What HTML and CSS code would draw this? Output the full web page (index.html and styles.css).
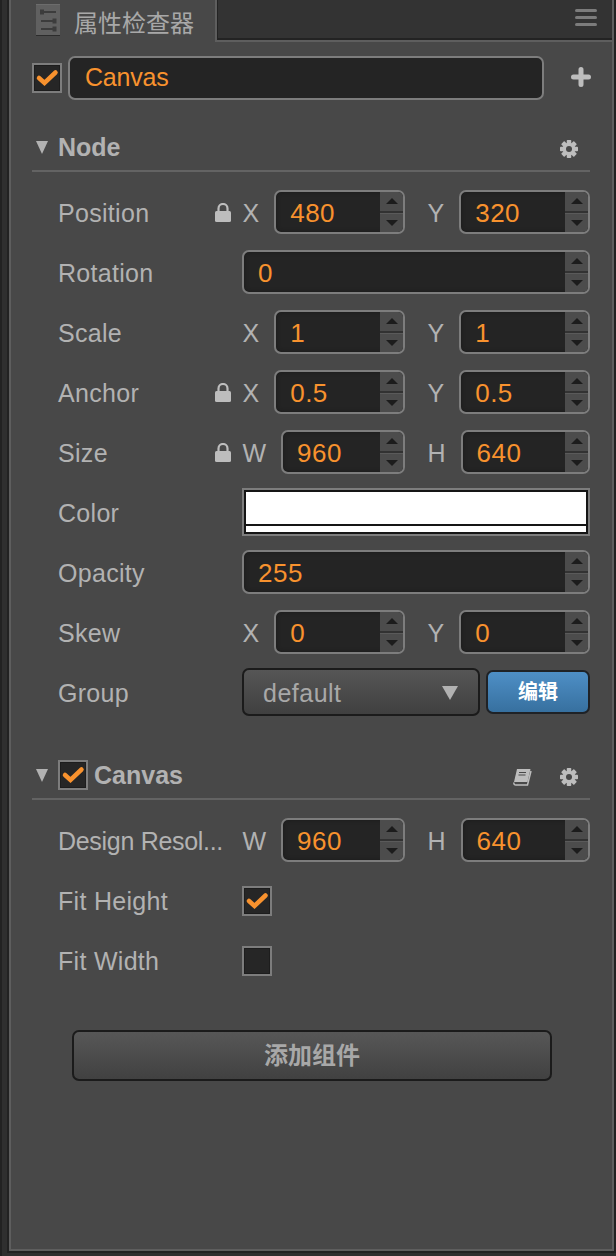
FILE: index.html
```html
<!DOCTYPE html>
<html lang="en">

<head>
    <meta charset="UTF-8">
    <title>属性检查器</title>
    <link rel="stylesheet" href="styles.css">
</head>

<body>
    <svg class="defs" width="0" height="0">
        <symbol id="gear" viewBox="0 0 24 24">
            <g fill="#bdbdbd">
                <rect x="9" y="0" width="6" height="24" rx="1"/>
                <rect x="9" y="0" width="6" height="24" rx="1" transform="rotate(45 12 12)"/>
                <rect x="9" y="0" width="6" height="24" rx="1" transform="rotate(90 12 12)"/>
                <rect x="9" y="0" width="6" height="24" rx="1" transform="rotate(135 12 12)"/>
            </g>
            <circle cx="12" cy="12" r="6.5" fill="none" stroke="#bdbdbd" stroke-width="4"/>
            <circle cx="12" cy="12" r="4" fill="#484848"/>
        </symbol>
        <symbol id="lock" viewBox="0 0 16 19">
            <path d="M3.500 9V5.500a4.500 4.500 0 0 1 9 0V9" fill="none" stroke="#bdbdbd" stroke-width="2.200"/>
            <rect x="0" y="8" width="16" height="11" rx="1.500" fill="#bdbdbd"/>
        </symbol>
        <symbol id="check" viewBox="0 0 24 24">
            <path d="M4 12l5.500 5L20.500 6.500" fill="none" stroke="#f8922e" stroke-width="4.500" stroke-linecap="round"/>
        </symbol>
    </svg>

    <div class="panel">
        <div class="tabbar">
            <div class="tab">
                <svg class="tab-icon" width="24" height="32" viewBox="0 0 24 32">
                    <rect width="24" height="31" fill="#606060"/>
                    <rect width="24" height="1" fill="#6c6c6c"/>
                    <rect y="31" width="24" height="1" fill="#2c2c2c"/>
                    <path d="M5 8h15M5 17h15M5 25h15" stroke="#3c3c3c" stroke-width="2"/>
                    <path d="M6 5.500v5M18.500 14.500v5M18.500 22.500v5" stroke="#3c3c3c" stroke-width="4"/>
                </svg>
                <span class="tab-title">属性检查器</span>
            </div>
            <div class="tab-rest">
                <div class="menu"><i></i><i></i><i></i></div>
            </div>
        </div>

        <div class="content">
            <div class="name-row">
                <span class="check"><svg width="24" height="24"><use href="#check"/></svg></span>
                <div class="name-input">Canvas</div>
                <svg class="plus" width="20" height="20" viewBox="0 0 20 20">
                    <path d="M10 2.500v15M2.500 10h15" stroke="#bdbdbd" stroke-width="5" stroke-linecap="round"/>
                </svg>
            </div>

            <div class="sec-head">
                <span class="tri"></span>
                <span class="sec-title">Node</span>
                <svg class="gear" width="18" height="18"><use href="#gear"/></svg>
            </div>

            <div class="row">
                <div class="label"><span>Position</span><svg class="lock" width="16" height="19"><use href="#lock"/></svg></div>
                <div class="pair-wrap">
                    <div class="pair"><span class="axis">X</span><div class="field"><span class="val">480</span><div class="spin"><i class="up"></i><i class="down"></i></div></div></div>
                    <div class="pair"><span class="axis">Y</span><div class="field"><span class="val">320</span><div class="spin"><i class="up"></i><i class="down"></i></div></div></div>
                </div>
            </div>
            <div class="row">
                <div class="label"><span>Rotation</span></div>
                <div class="field"><span class="val">0</span><div class="spin"><i class="up"></i><i class="down"></i></div></div>
            </div>
            <div class="row">
                <div class="label"><span>Scale</span></div>
                <div class="pair-wrap">
                    <div class="pair"><span class="axis">X</span><div class="field"><span class="val">1</span><div class="spin"><i class="up"></i><i class="down"></i></div></div></div>
                    <div class="pair"><span class="axis">Y</span><div class="field"><span class="val">1</span><div class="spin"><i class="up"></i><i class="down"></i></div></div></div>
                </div>
            </div>
            <div class="row">
                <div class="label"><span>Anchor</span><svg class="lock" width="16" height="19"><use href="#lock"/></svg></div>
                <div class="pair-wrap">
                    <div class="pair"><span class="axis">X</span><div class="field"><span class="val">0.5</span><div class="spin"><i class="up"></i><i class="down"></i></div></div></div>
                    <div class="pair"><span class="axis">Y</span><div class="field"><span class="val">0.5</span><div class="spin"><i class="up"></i><i class="down"></i></div></div></div>
                </div>
            </div>
            <div class="row">
                <div class="label"><span>Size</span><svg class="lock" width="16" height="19"><use href="#lock"/></svg></div>
                <div class="pair-wrap">
                    <div class="pair"><span class="axis">W</span><div class="field"><span class="val">960</span><div class="spin"><i class="up"></i><i class="down"></i></div></div></div>
                    <div class="pair"><span class="axis">H</span><div class="field"><span class="val">640</span><div class="spin"><i class="up"></i><i class="down"></i></div></div></div>
                </div>
            </div>
            <div class="row">
                <div class="label"><span>Color</span></div>
                <div class="color"><div class="color-main"></div><div class="color-alpha"></div></div>
            </div>
            <div class="row">
                <div class="label"><span>Opacity</span></div>
                <div class="field"><span class="val">255</span><div class="spin"><i class="up"></i><i class="down"></i></div></div>
            </div>
            <div class="row">
                <div class="label"><span>Skew</span></div>
                <div class="pair-wrap">
                    <div class="pair"><span class="axis">X</span><div class="field"><span class="val">0</span><div class="spin"><i class="up"></i><i class="down"></i></div></div></div>
                    <div class="pair"><span class="axis">Y</span><div class="field"><span class="val">0</span><div class="spin"><i class="up"></i><i class="down"></i></div></div></div>
                </div>
            </div>
            <div class="row">
                <div class="label"><span>Group</span></div>
                <div class="group">
                    <div class="select"><span>default</span><span class="select-tri"></span></div>
                    <div class="btn-edit">编辑</div>
                </div>
            </div>

            <div class="sec-head sec-canvas">
                <span class="tri"></span>
                <span class="check"><svg width="24" height="24"><use href="#check"/></svg></span>
                <span class="sec-title">Canvas</span>
                <svg class="book" width="20" height="18" viewBox="0 0 20 18">
                    <path d="M5 1h13.500l-3 13H2z" fill="#bdbdbd"/>
                    <path d="M2 14.500q-.6 2.500 2 2.500h11.500l3.500-14" fill="none" stroke="#bdbdbd" stroke-width="1.500"/>
                    <path d="M7 4.500h7M6.500 7h7" stroke="#484848" stroke-width="1.200"/>
                </svg>
                <svg class="gear" width="18" height="18"><use href="#gear"/></svg>
            </div>

            <div class="row row-first">
                <div class="label"><span class="nowrap">Design Resol...</span></div>
                <div class="pair-wrap">
                    <div class="pair"><span class="axis">W</span><div class="field"><span class="val">960</span><div class="spin"><i class="up"></i><i class="down"></i></div></div></div>
                    <div class="pair"><span class="axis">H</span><div class="field"><span class="val">640</span><div class="spin"><i class="up"></i><i class="down"></i></div></div></div>
                </div>
            </div>
            <div class="row">
                <div class="label"><span>Fit Height</span></div>
                <span class="check"><svg width="24" height="24"><use href="#check"/></svg></span>
            </div>
            <div class="row">
                <div class="label"><span>Fit Width</span></div>
                <span class="check"></span>
            </div>

            <div class="btn-add">添加组件</div>
        </div>
    </div>
</body>

</html>
```
FILE: styles.css
```css
body {
    margin: 0;
    height: 1256px;
    overflow: hidden;
    background-color: #2f2f2f;
    border-left: 2px solid #222;
    box-sizing: border-box;
    font-family: "Liberation Sans", "Noto Sans CJK SC", sans-serif;
    font-size: 25px;
    color: #b2b2b2;
}

.defs {
    position: absolute;
}

.panel {
    box-sizing: border-box;
    width: 605px;
    height: 1251px;
    margin-left: 7px;
    border-left: 2px solid #5e5e5e;
    border-right: 2px solid #5e5e5e;
    border-bottom: 2px solid #5e5e5e;
    background-color: #484848;
    box-shadow: 0 0 0 2px #222;
}

/* tabs */
.tabbar {
    display: flex;
    height: 42px;
}

.tab {
    display: flex;
    align-items: center;
    width: 204px;
    padding-left: 25px;
    box-sizing: border-box;
}

.tab-icon {
    margin-top: -2px;
}

.tab-title {
    margin-left: 14px;
    font-size: 24px;
    color: #a8a8a8;
}

.tab-rest {
    flex: 1;
    display: flex;
    justify-content: flex-end;
    box-sizing: border-box;
    padding: 9px 15px 0 0;
    background-color: #333;
    border-left: 2px solid #5e5e5e;
    border-bottom: 2px solid #5e5e5e;
    box-shadow: inset 1px 0 0 #232323, inset 0 -2px 0 #232323;
}

.menu i {
    display: block;
    width: 22px;
    height: 3px;
    margin-bottom: 4px;
    border-radius: 2px;
    background-color: #7c7c7c;
}

.content {
    padding: 14px 22px 0 21px;
}

/* name row */
.name-row {
    display: flex;
    align-items: center;
    height: 44px;
}

.check {
    box-sizing: border-box;
    flex: none;
    display: flex;
    align-items: center;
    justify-content: center;
    width: 30px;
    height: 30px;
    border: 2px solid #7d7d7d;
    background-color: #262626;
    box-shadow: inset 0 0 0 1px #1d1d1d;
}

.name-input {
    box-sizing: border-box;
    flex: none;
    width: 476px;
    height: 44px;
    margin-left: 6px;
    padding-left: 15px;
    line-height: 38px;
    letter-spacing: -.2px;
    border: 2px solid #7d7d7d;
    border-radius: 7px;
    background-color: #242424;
    color: #f8922e;
}

.plus {
    flex: none;
    margin-left: 27px;
    margin-top: -3px;
}

/* section headers */
.sec-head {
    display: flex;
    align-items: center;
    box-sizing: border-box;
    height: 48px;
    margin-top: 24px;
    padding-left: 4px;
    border-bottom: 2px solid #636363;
}

.tri {
    width: 0;
    height: 0;
    margin-right: 10px;
    border-left: 6px solid transparent;
    border-right: 6px solid transparent;
    border-top: 13px solid #b2b2b2;
}

.sec-title {
    font-weight: bold;
    color: #b2b2b2;
}

.gear {
    margin-left: auto;
    margin-right: 12px;
    margin-top: 4px;
}

.sec-canvas {
    margin-top: 29px;
}

.sec-canvas .check {
    margin-right: 6px;
}

.sec-canvas .gear {
    margin-left: 28px;
}

.book {
    margin-left: auto;
    margin-top: 4px;
}

/* rows */
.row {
    display: flex;
    align-items: center;
    box-sizing: border-box;
    height: 60px;
    padding: 0 0 2px 26px;
}

.row > .check {
    margin-top: 2px;
}

.sec-head + .row {
    margin-top: 11px;
}

.row-first {
    margin-top: 12px;
}

.label {
    flex: none;
    display: flex;
    align-items: center;
    justify-content: space-between;
    box-sizing: border-box;
    width: 184px;
    margin-top: 2px;
    padding-right: 11px;
    letter-spacing: .3px;
}

.nowrap {
    white-space: nowrap;
    letter-spacing: -.3px;
}

.lock {
    margin-top: -2px;
}

.pair-wrap {
    flex: 1;
    display: flex;
    gap: 22px;
}

.pair {
    flex: 1;
    display: flex;
    align-items: center;
    gap: 15px;
}

.axis {
    flex: none;
    margin: 2px 0 0 .5px;
}

/* number field */
.field {
    flex: 1;
    display: flex;
    justify-content: space-between;
    box-sizing: border-box;
    height: 44px;
    border: 2px solid #7d7d7d;
    border-radius: 7px;
    background-color: #242424;
    box-shadow: inset 0 0 4px #1a1a1a;
    overflow: hidden;
}

.val {
    padding-left: 14px;
    font-size: 26px;
    line-height: 42px;
    letter-spacing: .5px;
    color: #f8922e;
}

.spin {
    flex: none;
    display: flex;
    flex-direction: column;
    width: 23px;
    background-color: #4c4c4c;
}

.spin i {
    flex: 1;
    display: flex;
    align-items: center;
    justify-content: center;
}

.spin .up {
    border-bottom: 2px solid #323232;
}

.spin .down {
    border-top: 1px solid #5a5a5a;
}

.spin i::before {
    content: "";
    border-left: 6px solid transparent;
    border-right: 6px solid transparent;
}

.spin .up::before {
    border-bottom: 6px solid #1c1c1c;
}

.spin .down::before {
    border-top: 6px solid #1c1c1c;
}

/* color */
.color {
    flex: 1;
    display: flex;
    flex-direction: column;
    box-sizing: border-box;
    height: 48px;
    border: 2px solid #7d7d7d;
    outline: 2px solid #151515;
    outline-offset: -4px;
    padding: 2px;
}

.color-main {
    height: 32px;
    background-color: #fff;
    border-bottom: 2px solid #151515;
}

.color-alpha {
    flex: 1;
    background-color: #fff;
}

/* group */
.group {
    flex: 1;
    display: flex;
    align-items: center;
    gap: 6px;
}

.select {
    box-sizing: border-box;
    flex: none;
    display: flex;
    align-items: center;
    justify-content: space-between;
    width: 238px;
    height: 48px;
    padding: 2px 20px 0 19px;
    letter-spacing: .5px;
    border: 2px solid #1b1b1b;
    border-radius: 7px;
    background: linear-gradient(#565656, #404040);
    color: #a8a8a8;
}

.select-tri {
    border-left: 8px solid transparent;
    border-right: 8px solid transparent;
    border-top: 14px solid #b2b2b2;
}

.btn-edit {
    box-sizing: border-box;
    flex: 1;
    height: 44px;
    text-align: center;
    line-height: 40px;
    font-size: 20px;
    font-weight: bold;
    color: #fff;
    border: 2px solid #1f2226;
    border-radius: 7px;
    background: linear-gradient(#4e8fc6, #37709f);
}

/* add button */
.btn-add {
    box-sizing: border-box;
    width: 480px;
    height: 51px;
    margin: 39px 0 0 40px;
    text-align: center;
    line-height: 47px;
    font-size: 24px;
    font-weight: bold;
    color: #a8a8a8;
    border: 2px solid #1b1b1b;
    border-radius: 7px;
    background: linear-gradient(#575757, #414141);
}
```
